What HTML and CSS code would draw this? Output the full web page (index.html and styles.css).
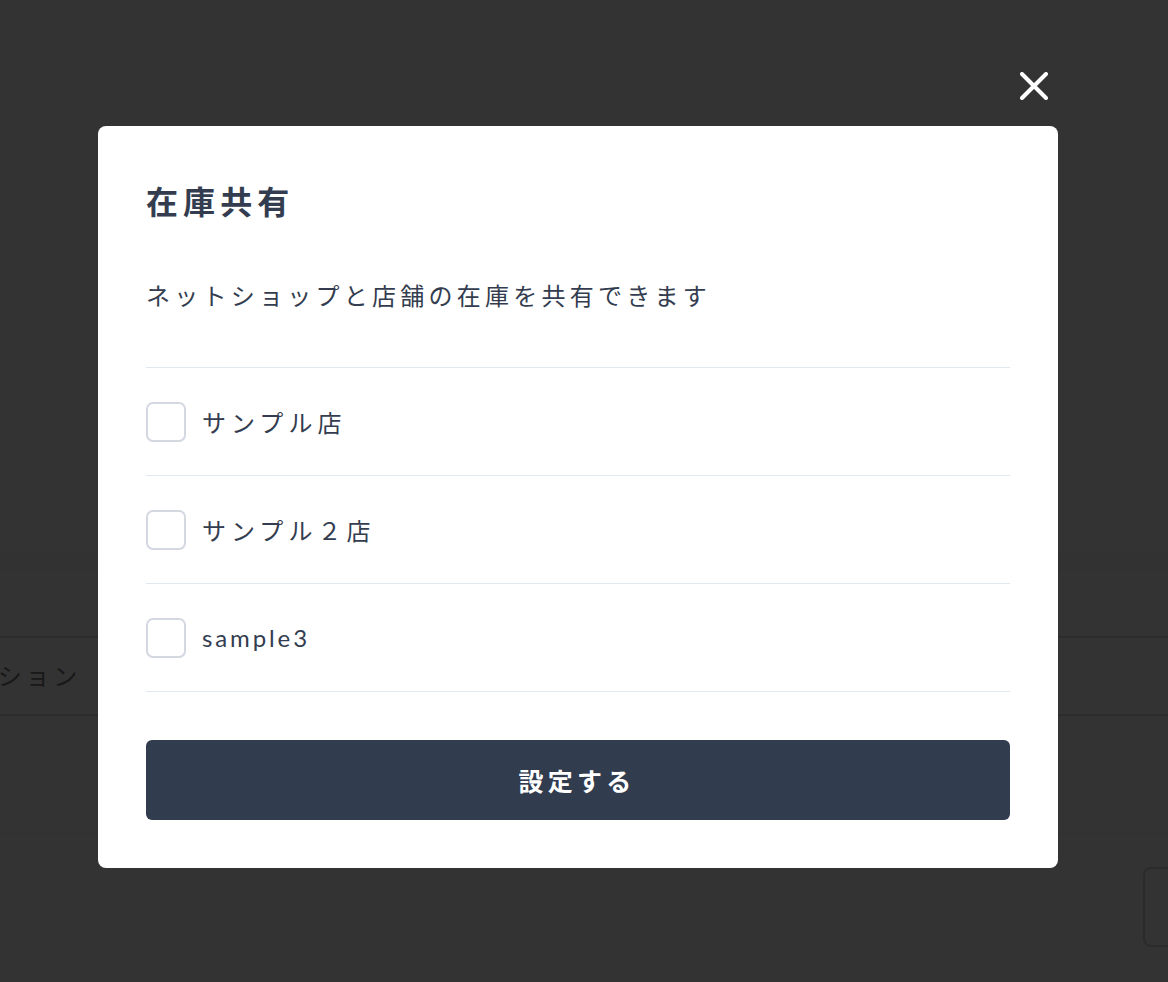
FILE: index.html
```html
<!DOCTYPE html>
<html lang="ja">
<head>
<meta charset="utf-8">
<title>在庫共有</title>
<link rel="stylesheet" href="styles.css">
</head>
<body>
<div class="page">
  <header class="page-header"></header>
  <div class="page-section"></div>
  <div class="page-row"><span class="page-label">オプション</span></div>
  <div class="page-row page-row-tall"></div>
  <div class="page-foot"><div class="page-box"></div></div>
</div>

<div class="overlay">
  <div class="modal">
    <button class="close" aria-label="閉じる">
      <svg width="28" height="28" viewBox="0 0 28 28"><path d="M2 2 L26 26 M26 2 L2 26" stroke="#fff" stroke-width="4" stroke-linecap="round" fill="none"/></svg>
    </button>
    <h2 class="title">在庫共有</h2>
    <p class="lead">ネットショップと店舗の在庫を共有できます</p>
    <ul class="list">
      <li class="item"><span class="check"></span><span class="label">サンプル店</span></li>
      <li class="item"><span class="check"></span><span class="label">サンプル２店</span></li>
      <li class="item"><span class="check"></span><span class="label label-latin">sample3</span></li>
    </ul>
    <button class="submit">設定する</button>
  </div>
</div>
</body>
</html>
```
FILE: styles.css
```css
* { box-sizing: border-box; }
html, body { margin: 0; padding: 0; }
body {
  width: 1168px;
  height: 982px;
  overflow: hidden;
  background: #fff;
  font-family: Lato, "Noto Sans CJK JP", sans-serif;
  color: #333d4f;
}

/* underlying page (dimmed by overlay) */
.page { width: 1168px; height: 982px; }
.page-header { height: 138px; border-bottom: 1px solid #f4f4f4; }
.page-section { height: 498px; background: linear-gradient(#fff 0, #fff 400px, #fafafa 420px, #fafafa 434px, #fff 436px); }
.page-row {
  height: 78px;
  border-top: 2px solid #dcdcdc;
  display: flex;
  align-items: center;
}
.page-row-tall { height: 120px; border-bottom: 1px solid #f0f0f0; }
.page-label {
  margin-left: -58px;
  margin-top: -4px;
  font-size: 24px;
  letter-spacing: 0.16em;
  color: #7a7a7a;
}
.page-foot { display: flex; justify-content: flex-end; padding-top: 33px; }
.page-box {
  width: 25px;
  height: 80px;
  border: 2px solid #d4d4d4;
  border-right: none;
  border-radius: 8px 0 0 8px;
}

.overlay {
  position: fixed;
  inset: 0;
  background: rgba(0, 0, 0, 0.8);
  padding: 126px 110px 0 98px;
}

.modal {
  position: relative;
  background: #fff;
  border-radius: 8px;
  padding: 48px;
}

.close {
  position: absolute;
  top: -54px;
  right: 10px;
  width: 28px;
  height: 28px;
  padding: 0;
  border: 0;
  background: none;
  display: block;
}
.close svg { display: block; }

.title {
  margin: 0;
  font-size: 32px;
  line-height: 56px;
  font-weight: 700;
  letter-spacing: 0.16em;
}
.lead {
  margin: 48px 0 53px;
  font-size: 24px;
  line-height: 36px;
  letter-spacing: 0.177em;
}
.list {
  list-style: none;
  margin: 0;
  padding: 0;
  border-top: 1px solid #e2e8f0;
}
.item {
  height: 108px;
  border-bottom: 1px solid #e2e8f0;
  display: flex;
  align-items: center;
  gap: 16px;
}
.check {
  width: 40px;
  height: 40px;
  border: 2px solid #d3d8e1;
  border-radius: 7px;
  flex: none;
}
.label {
  font-size: 24px;
  letter-spacing: 0.21em;
}
.label-latin { letter-spacing: 0.12em; }
.submit {
  display: block;
  width: 100%;
  height: 80px;
  margin-top: 48px;
  border: 0;
  border-radius: 6px;
  background: #323c4f;
  color: #fff;
  font-family: inherit;
  font-size: 25px;
  font-weight: 700;
  letter-spacing: 0.17em;
  padding-left: 0.17em;
}
```
